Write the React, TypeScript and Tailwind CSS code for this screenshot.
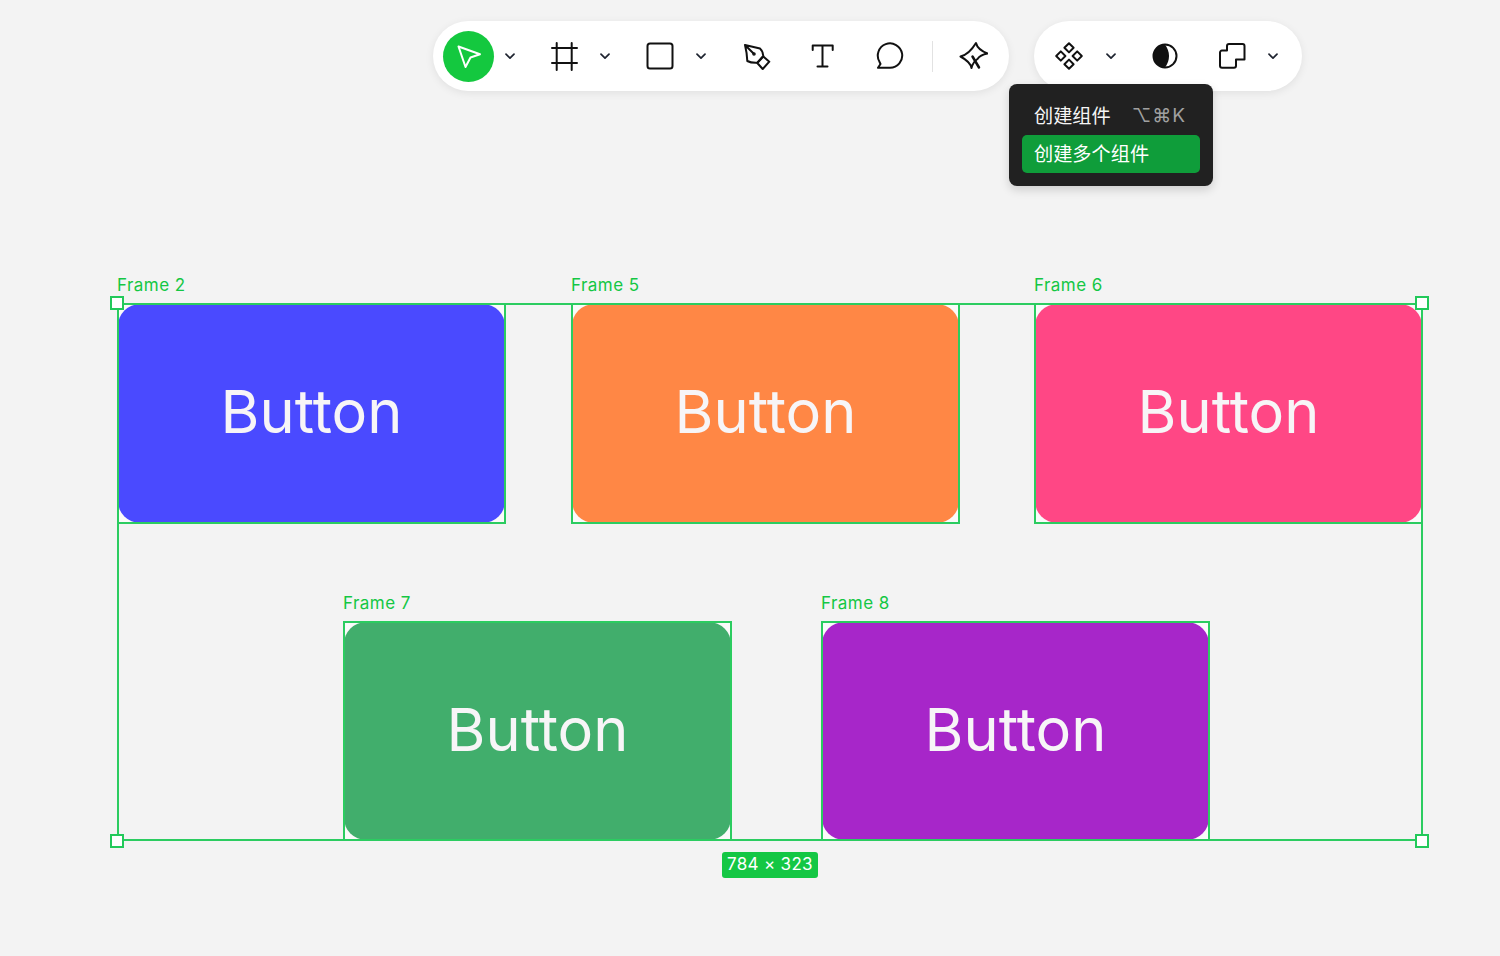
const Chevron = ({ className = "" }: { className?: string }) => (
  <svg width="10" height="7" viewBox="0 0 10 7" fill="none" className={className}>
    <path d="M1 1.2 5 5.2 9 1.2" stroke="#1f2430" strokeWidth="1.7" strokeLinecap="round" strokeLinejoin="round" />
  </svg>
);

const Icon = ({ children, size = 30 }: { children: React.ReactNode; size?: number }) => (
  <svg
    width={size}
    height={size}
    viewBox="0 0 30 30"
    fill="none"
    stroke="#111"
    strokeWidth="2"
    strokeLinecap="round"
    strokeLinejoin="round"
  >
    {children}
  </svg>
);

const Frame = ({ name, color }: { name: string; color: string }) => (
  <div className="relative w-[389px] h-[220.5px] p-px bg-[#fafafa]">
    <span className="absolute left-0 top-[-29px] text-[17px] leading-[22px] text-[#14c744] tracking-[0.45px] whitespace-nowrap">
      {name}
    </span>
    <div
      className={`w-full h-full rounded-[22px] flex items-center justify-center pb-[3px] text-[59.5px] font-normal text-[#f7f5f7] ${color}`}
    >
      Button
    </div>
    <div className="absolute inset-0 border-2 border-[#2bcc60]" />
  </div>
);

const Handle = ({ className }: { className: string }) => (
  <div className={`absolute w-[14px] h-[14px] bg-white border-2 border-[#22c95a] ${className}`} />
);

export default function App() {
  return (
    <div className="relative w-[1500px] h-[956px] overflow-hidden bg-[#f3f3f3] font-['Inter','Noto_Sans_CJK_SC',sans-serif]">
      <div className="flex pt-[21px] pl-[433px]">
        <div className="w-[576px] h-[70px] rounded-[35px] bg-white shadow-[0_2px_8px_rgba(0,0,0,0.08)] flex items-center pl-[10px]">
          <div className="w-[51px] h-[51px] rounded-full bg-[#14c83f] flex items-center justify-center">
            <svg width="28" height="28" viewBox="0 0 28 28" fill="none" stroke="#fff" strokeWidth="2" strokeLinejoin="round">
              <path d="M3.5 4.500 25 12.200 15.500 15.500 10.500 25Z" />
            </svg>
          </div>
          <Chevron className="ml-[11px]" />
          <div className="ml-[34px]">
            <Icon>
              <path d="M7.700 2v27M22.700 2v27M3 7h25M3 22h25" />
            </Icon>
          </div>
          <Chevron className="ml-[21px]" />
          <div className="ml-[35px]">
            <Icon>
              <rect x="2.500" y="2.500" width="25" height="25" rx="2.500" />
            </Icon>
          </div>
          <Chevron className="ml-[21px]" />
          <div className="ml-[36px]">
            <Icon>
              <path d="M3 4 18 7.500Q21 10 21.300 15L15.300 21.700Q9 22 5.300 20Q5 12 3 4ZM3 4 11.300 12.300" />
              <path d="M21.300 15.500 27.300 20.700 20.700 28 15.300 22Z" />
              <circle cx="12" cy="13" r="0.800" />
            </Icon>
          </div>
          <div className="ml-[35px]">
            <Icon>
              <path d="M5.700 9V4.500H25.700V9M15.500 4.500V25.500M10.500 25.500H20.500" />
            </Icon>
          </div>
          <div className="ml-[37px]">
            <Icon>
              <path d="M16 26.800A12.200 12.200 0 1 0 5.500 20.800L6.500 23 4 26.800Z" />
            </Icon>
          </div>
          <div className="ml-[28px] w-px h-[31px] bg-[#e2e2e2]" />
          <div className="ml-[25px]">
            <Icon>
              <path d="M18 2Q19.500 8.500 29.500 12.500Q22 14 19.500 18Q15 21 13.500 27Q12.500 21 2.500 15.500Q11 13.500 18 2Z" />
              <path d="M14.500 15.500 21 26.500" strokeWidth="2.500" />
            </Icon>
          </div>
        </div>

        <div className="ml-[25px] w-[268px] h-[70px] rounded-[35px] bg-white shadow-[0_2px_8px_rgba(0,0,0,0.08)] flex items-center pl-[20px]">
          <Icon>
            <path d="M15 2.200 19.600 6.800 15 11.400 10.400 6.800ZM6.800 10.400 11.400 15 6.800 19.600 2.200 15ZM23.200 10.400 27.800 15 23.200 19.600 18.600 15ZM15 18.600 19.600 23.200 15 27.800 10.400 23.200Z" />
          </Icon>
          <Chevron className="ml-[22px]" />
          <div className="ml-[35px]">
            <svg width="28" height="28" viewBox="0 0 28 28">
              <circle cx="14" cy="14" r="11.500" fill="#fff" stroke="#111" strokeWidth="2" />
              <path d="M14 2.500A11.500 11.500 0 0 0 14 25.500Q18 20 18 14Q18 8 14 2.500Z" fill="#111" />
            </svg>
          </div>
          <div className="ml-[38px]">
            <Icon>
              <path d="M10 5a2 2 0 0 1 2-2H25.500a2 2 0 0 1 2 2V18.500H19V24.700a2 2 0 0 1-2 2H5a2 2 0 0 1-2-2V11.500a2 2 0 0 1 2-2H10Z" />
            </Icon>
          </div>
          <Chevron className="ml-[21px]" />
        </div>
      </div>

      <div className="absolute left-[1009px] top-[84px] w-[204px] h-[102px] rounded-[8px] bg-[#212121] shadow-[0_4px_10px_rgba(0,0,0,0.15)] px-[13px] pt-[13px] text-[19.2px]">
        <div className="h-[38px] pl-[12px] pt-px flex items-center justify-between pr-[14px] text-[#f5f5f5]">
          <span>创建组件</span>
          <span className="text-[19px] tracking-[1px] text-[#a0a0a0]">⌥⌘K</span>
        </div>
        <div className="h-[38px] pl-[12px] pt-px rounded-[5px] bg-[#0f9d3a] flex items-center text-white">创建多个组件</div>
      </div>

      <div className="absolute left-[117px] top-[303px] w-[1306px] h-[538px] flex flex-col justify-between">
        <div className="flex">
          <Frame name="Frame 2" color="bg-[#4a4aff]" />
          <div className="ml-[65px]">
            <Frame name="Frame 5" color="bg-[#ff8745]" />
          </div>
          <div className="ml-[74px]">
            <Frame name="Frame 6" color="bg-[#ff4785]" />
          </div>
        </div>
        <div className="flex pl-[226px]">
          <Frame name="Frame 7" color="bg-[#41ae6c]" />
          <div className="ml-[89px]">
            <Frame name="Frame 8" color="bg-[#a726c9]" />
          </div>
        </div>
        <div className="absolute inset-0 border-2 border-[#2bcc60] pointer-events-none" />
        <Handle className="left-[-7px] top-[-7px]" />
        <Handle className="right-[-6px] top-[-7px]" />
        <Handle className="left-[-7px] bottom-[-7px]" />
        <Handle className="right-[-6px] bottom-[-7px]" />
        <div className="absolute left-[605px] top-[549px] w-[96px] h-[26px] rounded-[3px] bg-[#14c744] text-white text-[17px] flex items-center justify-center tracking-[0.3px] whitespace-nowrap">
          784 × 323
        </div>
      </div>
    </div>
  );
}
